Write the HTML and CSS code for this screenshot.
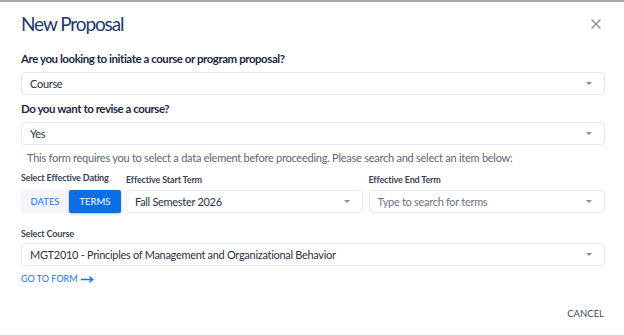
FILE: index.html
```html
<!DOCTYPE html>
<html lang="en">
<head>
  <meta charset="UTF-8">
  <meta name="viewport" content="width=device-width, initial-scale=1.0">
  <title>New Proposal</title>
  <link rel="stylesheet" href="styles.css">
</head>
<body>
  <div class="dialog">
    <div class="dialog-header">
      <h2>New Proposal</h2>
      <button class="close" aria-label="Close">
        <svg width="10" height="10" viewBox="0 0 10 10"><path d="M0.5 0.5L9.5 9.5M9.5 0.5L0.5 9.5" stroke="#858a93" stroke-width="1.3" fill="none"/></svg>
      </button>
    </div>

    <div class="question">Are you looking to initiate a course or program proposal?</div>
    <div class="select"><span>Course</span><i class="caret"></i></div>

    <div class="question">Do you want to revise a course?</div>
    <div class="select"><span>Yes</span><i class="caret"></i></div>

    <p class="info">This form requires you to select a data element before proceeding. Please search and select an item below:</p>

    <div class="dating-row">
      <div class="field field-toggle">
        <label>Select Effective Dating</label>
        <div class="toggle">
          <button class="toggle-btn">DATES</button>
          <button class="toggle-btn active">TERMS</button>
        </div>
      </div>
      <div class="field field-grow">
        <label>Effective Start Term</label>
        <div class="select"><span>Fall Semester 2026</span><i class="caret"></i></div>
      </div>
      <div class="field field-grow">
        <label>Effective End Term</label>
        <div class="select"><span class="placeholder">Type to search for terms</span><i class="caret"></i></div>
      </div>
    </div>

    <div class="field course-field">
      <label>Select Course</label>
      <div class="select"><span>MGT2010 - Principles of Management and Organizational Behavior</span><i class="caret"></i></div>
    </div>

    <a class="go-link" href="#">GO TO FORM <svg width="13" height="7" viewBox="0 0 13 7"><path d="M0 3.5H11.5M8.5 0.8L11.8 3.5L8.5 6.2" stroke="#1a73e8" stroke-width="1.4" fill="none"/></svg></a>

    <div class="dialog-footer">
      <button class="cancel">CANCEL</button>
    </div>
  </div>
</body>
</html>
```

FILE: styles.css
```css
body {
  margin: 0;
  padding: 0;
  font-family: Lato, "Noto Sans", sans-serif;
  background: #fff;
  border-top: 2px solid #a9a9a9;
}
.dialog {
  padding: 0 19px 0 21px;
  color: #1e2a44;
}
.dialog-header {
  display: flex;
  justify-content: space-between;
  align-items: center;
  height: 43px;
}
.dialog-header h2 {
  margin: 0;
  font-size: 19px;
  font-weight: 400;
  letter-spacing: -1.1px;
  color: #1f3b6b;
}
.close {
  background: none;
  border: none;
  padding: 0;
  margin-right: 4px;
  display: flex;
  cursor: pointer;
}
.question {
  font-size: 11.5px;
  font-weight: 700;
  letter-spacing: -0.45px;
  margin-top: 7px;
  margin-bottom: 6px;
  line-height: 14px;
}
.select {
  display: flex;
  align-items: center;
  justify-content: space-between;
  height: 21px;
  border: 1px solid #e4e8ef;
  border-radius: 4px;
  padding: 0 12px 0 8px;
  font-size: 11px;
  letter-spacing: -0.3px;
  color: #2a3347;
  background: #fff;
}
.select span {
  white-space: nowrap;
}
.placeholder {
  color: #6b7388;
}
.caret {
  width: 0;
  height: 0;
  border-left: 3px solid transparent;
  border-right: 3px solid transparent;
  border-top: 3px solid #8a8e96;
}
.info {
  margin: 6px 0 0 6px;
  font-size: 11px;
  letter-spacing: -0.25px;
  color: #5c6577;
  line-height: 14px;
}
.dating-row {
  display: flex;
  gap: 5px;
  margin-top: 7px;
  align-items: flex-end;
}
.field label {
  display: block;
  font-size: 9px;
  font-weight: 700;
  letter-spacing: -0.15px;
  color: #3a4254;
  margin-bottom: 4px;
  line-height: 12px;
}
.field-toggle label {
  margin-bottom: 6px;
}
.field-grow {
  flex: 1;
}
.field-grow + .field-grow {
  margin-left: 1px;
}
.toggle {
  display: flex;
  height: 23px;
}
.toggle-btn {
  font-family: inherit;
  font-size: 9.5px;
  border: none;
  background: #f3f5f9;
  color: #1a73e8;
  width: 48px;
  padding: 0;
  cursor: pointer;
}
.toggle-btn.active {
  background: #0b6fe4;
  color: #fff;
  width: 52px;
  border-radius: 2px;
  box-shadow: 0 1px 3px rgba(0,0,0,0.25);
}
.course-field {
  margin-top: 15px;
}
.course-field label {
  margin-bottom: 3px;
}
.go-link {
  display: inline-flex;
  align-items: center;
  gap: 3px;
  margin-top: 7px;
  font-size: 9px;
  line-height: 12px;
  color: #1a73e8;
  text-decoration: none;
}
.dialog-footer {
  display: flex;
  justify-content: flex-end;
  margin-top: 23px;
}
.cancel {
  font-family: inherit;
  font-size: 9.5px;
  background: none;
  border: none;
  padding: 0;
  margin-right: 1px;
  color: #3a4a6b;
  cursor: pointer;
}
```
